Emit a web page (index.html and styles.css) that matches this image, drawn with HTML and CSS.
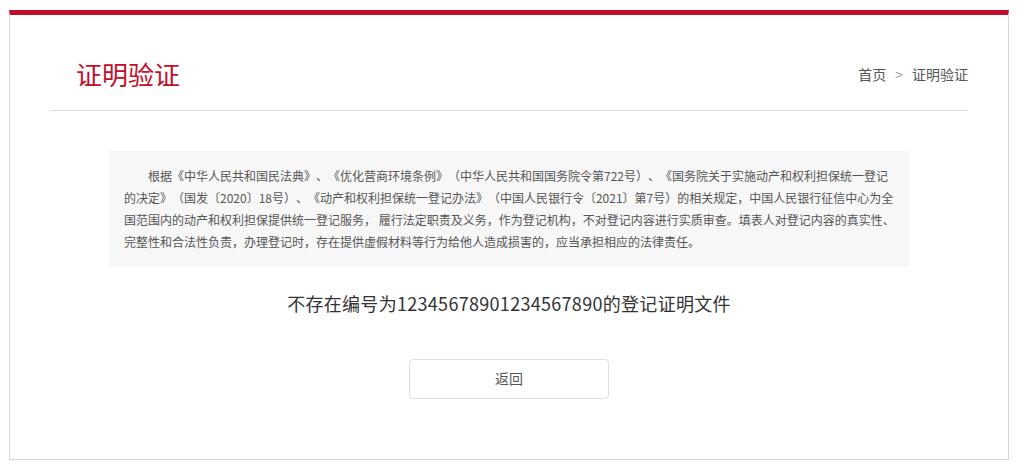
FILE: index.html
```html
<!DOCTYPE html>
<html lang="zh-CN">
<head>
<meta charset="utf-8">
<title>证明验证</title>
<link rel="stylesheet" href="styles.css">
</head>
<body>
<div class="page">
  <div class="header">
    <h1 class="title">证明验证</h1>
    <div class="crumb"><span>首页</span><span class="sep">&gt;</span><span>证明验证</span></div>
  </div>
  <div class="notice">根据《中华人民共和国民法典》、《优化营商环境条例》（中华人民共和国国务院令第722号）、《国务院关于实施动产和权利担保统一登记的决定》（国发〔2020〕18号）、《动产和权利担保统一登记办法》（中国人民银行令〔2021〕第7号）的相关规定，中国人民银行征信中心为全国范围内的动产和权利担保提供统一登记服务， 履行法定职责及义务，作为登记机构，不对登记内容进行实质审查。填表人对登记内容的真实性、完整性和合法性负责，办理登记时，存在提供虚假材料等行为给他人造成损害的，应当承担相应的法律责任。</div>
  <p class="message">不存在编号为12345678901234567890的登记证明文件</p>
  <div class="actions"><button class="btn" type="button">返回</button></div>
</div>
</body>
</html>
```

FILE: styles.css
```css
html, body {
  margin: 0;
  padding: 0;
  background: #fff;
}
body {
  font-family: "Microsoft YaHei", "Noto Sans CJK SC", "Noto Sans", sans-serif;
  color: #333;
  text-spacing-trim: space-all;
}
.page {
  box-sizing: border-box;
  width: 1000px;
  height: 450px;
  margin: 10px 0 0 9px;
  border: 1px solid #d6d6d6;
  border-top: 5px solid #c20e2a;
  padding: 0 40px 60px;
}
.header {
  display: flex;
  align-items: center;
  justify-content: space-between;
  padding: 40px 0 17px;
  border-bottom: 1px solid #dddddd;
}
.title {
  margin: 0 0 0 26px;
  font-size: 26px;
  line-height: 38px;
  font-weight: normal;
  color: #c20e2a;
}
.crumb {
  font-size: 14px;
  line-height: 20px;
  color: #555;
}
.crumb .sep {
  color: #999;
  margin: 0 9px;
}
.notice {
  box-sizing: border-box;
  width: 800px;
  margin: 40px auto 0;
  padding: 14px 13px 14px 15px;
  background: #f7f7f7;
  font-size: 12px;
  line-height: 22px;
  color: #555;
  text-indent: 2em;
  text-align: left;
}
.message {
  margin: 24px 0 0;
  text-align: center;
  font-size: 18px;
  line-height: 24px;
  letter-spacing: 0.3px;
  color: #333;
}
.actions {
  display: flex;
  justify-content: center;
  margin-top: 44px;
}
.btn {
  width: 200px;
  height: 40px;
  border: 1px solid #dcdfe6;
  border-radius: 4px;
  background: #fff;
  font-family: inherit;
  font-size: 14px;
  line-height: 20px;
  color: #555;
  padding: 0 0 2px;
  cursor: pointer;
}
```
